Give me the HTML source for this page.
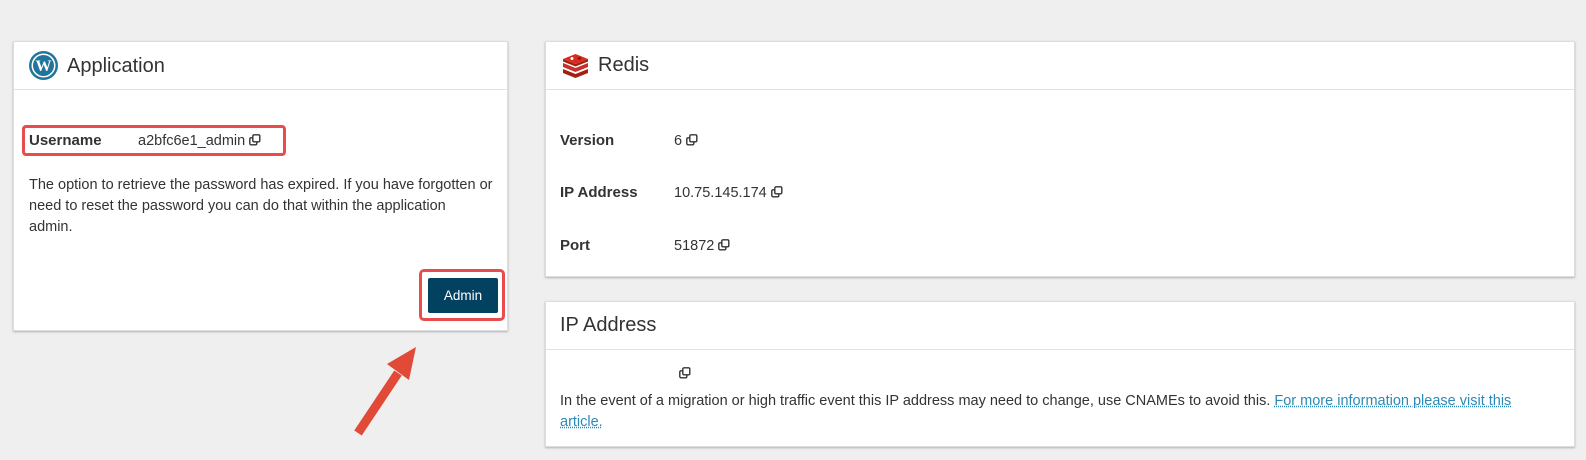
<!DOCTYPE html>
<html><head><meta charset="utf-8"><style>
body{margin:0;width:1586px;height:460px;background:#efefef;font-family:"Liberation Sans",sans-serif;color:#333;position:relative;overflow:hidden}
.card{position:absolute;background:#fff;border:1px solid #ddd;box-shadow:0 1px 2px rgba(0,0,0,.25)}
.hd{position:absolute;left:0;right:0;top:0;height:47px;border-bottom:1px solid #e3e3e3}
.t{position:absolute;font-size:20px;color:#333;white-space:nowrap}
.a{position:absolute;font-size:14.5px;white-space:nowrap;line-height:18px}
.b{font-weight:bold;font-size:15px}
.cp{display:inline-block;vertical-align:-1px;margin-left:4px}
</style></head><body>
<svg width="0" height="0" style="position:absolute"><defs><g id="c"><rect x="0.8" y="3.8" width="7" height="7" rx="1.3" fill="#fff" stroke="#333" stroke-width="1.4"/><rect x="3.8" y="0.8" width="7" height="7" rx="1.3" fill="#fff" stroke="#333" stroke-width="1.4"/></g></defs></svg>

<div class="card" style="left:13px;top:41px;width:493px;height:288px">
 <div class="hd"></div>
 <svg style="position:absolute;left:14px;top:8px" width="31" height="31" viewBox="0 0 31 31"><circle cx="15.5" cy="15.5" r="14.5" fill="#21759b"/><circle cx="15.5" cy="15.5" r="12" fill="#fff"/><circle cx="15.5" cy="15.5" r="10.5" fill="#21759b"/><text x="15.5" y="21" font-family="Liberation Serif" font-weight="bold" font-size="16" fill="#fff" text-anchor="middle">W</text></svg>
 <div class="t" style="left:53px;top:13px">Application</div>
 <div style="position:absolute;left:8px;top:83px;width:258px;height:25px;border:3px solid #e84c4c;border-radius:4px"></div>
 <div class="a b" style="left:15px;top:90px">Username</div>
 <div class="a" style="left:124px;top:90px">a2bfc6e1_admin<svg class="cp" width="12" height="12"><use href="#c"/></svg></div>
 <div class="a" style="left:15px;top:133px;line-height:21px">The option to retrieve the password has expired. If you have forgotten or<br>need to reset the password you can do that within the application<br>admin.</div>
 <div style="position:absolute;left:405px;top:227px;width:80px;height:46px;border:3px solid #e84c4c;border-radius:5px;background:#fff">
  <div style="position:absolute;left:6px;top:6px;width:70px;height:35px;background:#034161;border-radius:2px;color:#fff;font-size:13.5px;text-align:center;line-height:35px">Admin</div>
 </div>
</div>

<div class="card" style="left:545px;top:41px;width:1028px;height:234px">
 <div class="hd"></div>
 <svg style="position:absolute;left:16px;top:11px" width="27" height="25" viewBox="0 0 27 25"><path d="M1 16 L13.5 21 L26 16 L26 20 L13.5 25 L1 20Z" fill="#a41e11"/><path d="M1 10 L13.5 15 L26 10 L26 14 L13.5 19 L1 14Z" fill="#c6302b"/><path d="M1 6 L13.5 11 L26 6 L26 8.5 L13.5 13.5 L1 8.5Z" fill="#a41e11"/><path d="M1 6 L13.5 1 L26 6 L13.5 11Z" fill="#d82c20"/><circle cx="10" cy="5.5" r="1.5" fill="#fff"/><path d="M15 5 L19 4 L18 7Z" fill="#7a0c00"/></svg>
 <div class="t" style="left:52px;top:12px">Redis</div>
 <div class="a b" style="left:14px;top:90px">Version</div><div class="a" style="left:128px;top:90px">6<svg class="cp" width="12" height="12"><use href="#c"/></svg></div>
 <div class="a b" style="left:14px;top:142px">IP Address</div><div class="a" style="left:128px;top:142px">10.75.145.174<svg class="cp" width="12" height="12"><use href="#c"/></svg></div>
 <div class="a b" style="left:14px;top:195px">Port</div><div class="a" style="left:128px;top:195px">51872<svg class="cp" width="12" height="12"><use href="#c"/></svg></div>
</div>

<div class="card" style="left:545px;top:301px;width:1028px;height:144px">
 <div class="hd"></div>
 <div class="t" style="left:14px;top:12px">IP Address</div>
 <svg style="position:absolute;left:133px;top:65px" width="12" height="12"><use href="#c"/></svg>
 <div class="a" style="left:14px;top:89px;line-height:21px;white-space:normal;width:960px">In the event of a migration or high traffic event this IP address may need to change, use CNAMEs to avoid this. <span style="color:#2a8ab8;text-decoration:underline dotted">For more information please visit this article.</span></div>
</div>

<svg style="position:absolute;left:0;top:0" width="1586" height="460"><path d="M358 433 L398 373" stroke="#e04a36" stroke-width="9" stroke-linecap="butt"/><path d="M416 347 L387 364 L409 380Z" fill="#e04a36"/></svg>
</body></html>
